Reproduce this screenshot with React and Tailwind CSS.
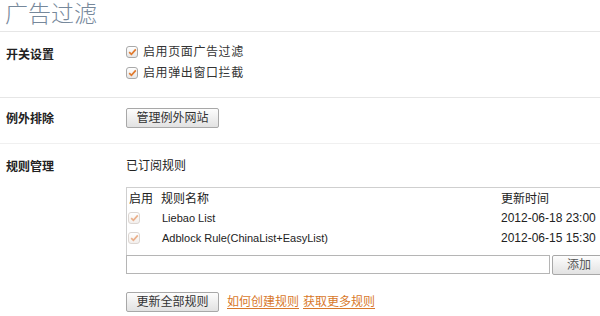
import React from "react";

const cjk = { fontFamily: '"Liberation Sans", "Noto Sans CJK SC", sans-serif' };

function Check({ faded }) {
  return (
    <span
      className={
        "flex h-[12px] w-[12px] shrink-0 items-center justify-center rounded-[3px] border bg-gradient-to-b " +
        (faded ? "border-[#dcd6d2] from-white to-[#f3efec]" : "border-[#a9a9a9] from-white to-[#e6e6e6]")
      }
    >
      <svg width="9" height="8" viewBox="0 0 9 8">
        <path
          d="M1.2 4.2 L3.4 6.3 L7.8 1.4"
          fill="none"
          stroke={faded ? "#eab08c" : "#e07a2e"}
          strokeWidth="1.7"
        />
      </svg>
    </span>
  );
}

function Button({ children, w }) {
  return (
    <button
      className={
        "h-[20px] whitespace-nowrap rounded-[2px] border border-[#a8a8a8] bg-gradient-to-b from-[#fdfdfd] to-[#e2e2e2] text-[12px] leading-[18px] text-[#333] " +
        w
      }
    >
      {children}
    </button>
  );
}

function Label({ children }) {
  return (
    <div className="w-[120px] shrink-0 text-[12px] font-bold text-[#222]">{children}</div>
  );
}

const rules = [
  { name: "Liebao List", time: "2012-06-18 23:00" },
  { name: "Adblock Rule(ChinaList+EasyList)", time: "2012-06-15 15:30" },
];

export default function App() {
  return (
    <div className="h-[316px] w-[600px] overflow-hidden bg-white text-[12px] text-[#222]" style={cjk}>
      <div className="h-[32px] border-b border-[#e6e6e6] pl-[5px] text-[23px] font-light leading-[28px] text-[#76889b]">
        广告过滤
      </div>

      <div className="flex h-[66px] border-b border-[#e6e6e6] pl-[6px] pt-[13px]">
        <div className="pt-[1px]">
          <Label>开关设置</Label>
        </div>
        <div className="flex flex-col gap-[7px]">
          <label className="flex h-[14px] items-center gap-[5px]">
            <Check />
            <span className="tracking-[0.6px] text-[#333]">启用页面广告过滤</span>
          </label>
          <label className="flex h-[14px] items-center gap-[5px]">
            <Check />
            <span className="tracking-[0.6px] text-[#333]">启用弹出窗口拦截</span>
          </label>
        </div>
      </div>

      <div className="flex h-[46px] items-start border-b border-[#f0f0f0] pl-[6px] pt-[10px]">
        <div className="pt-[2px]">
          <Label>例外排除</Label>
        </div>
        <Button w="w-[93px]">管理例外网站</Button>
      </div>

      <div className="flex pl-[6px] pt-[14px]">
        <Label>规则管理</Label>
        <div className="w-[480px] shrink-0">
          <div className="h-[29px] leading-[16px]">已订阅规则</div>
          <div className="border border-b-0 border-[#cfcfcf]">
            <div className="flex h-[20px] items-center pl-[2px] pt-[1px]">
              <span className="w-[32px]">启用</span>
              <span className="w-[340px]">规则名称</span>
              <span>更新时间</span>
            </div>
            {rules.map((r) => (
              <div key={r.name} className="flex h-[20px] items-center pl-[1px] text-[#222]">
                <span className="w-[34px]">
                  <Check faded />
                </span>
                <span className="w-[339px] text-[11px]">{r.name}</span>
                <span>{r.time}</span>
              </div>
            ))}
            <div className="h-[7px]" />
          </div>
          <div className="flex gap-[2px]">
            <input className="h-[19px] w-[425px] border border-[#b5b5b5] bg-white outline-none" />
            <Button w="w-[54px] text-[#555]">添加</Button>
          </div>
          <div className="mt-[17px] flex items-center">
            <Button w="w-[93px]">更新全部规则</Button>
            <a className="ml-[8px] text-[#d8782a] underline underline-offset-2">如何创建规则</a>
            <a className="ml-[4px] text-[#d8782a] underline underline-offset-2">获取更多规则</a>
          </div>
        </div>
      </div>
    </div>
  );
}
